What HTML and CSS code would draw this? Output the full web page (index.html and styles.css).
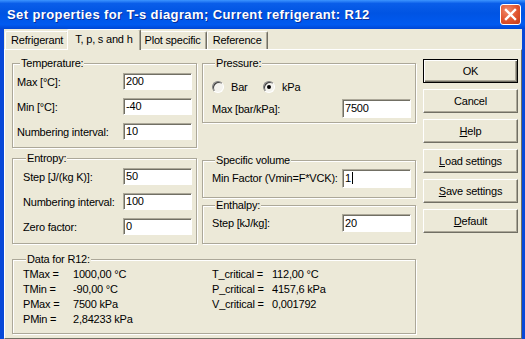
FILE: index.html
```html
<!DOCTYPE html>
<html lang="en">
<head>
    <meta charset="UTF-8" />
    <title>Set properties for T-s diagram</title>
    <link rel="stylesheet" href="styles.css">
</head>
<body>
<div class="window">
    <div class="titlebar">
        <span class="title">Set properties for T-s diagram; Current refrigerant: R12</span>
        <span class="close">
            <svg width="13" height="13" viewBox="0 0 13 13"><path d="M2 2 L11 11 M11 2 L2 11" stroke="#fff" stroke-width="2.4" stroke-linecap="square"/></svg>
        </span>
    </div>

    <div class="client">
        <div class="tabs">
            <div class="tab">Refrigerant</div>
            <div class="tab active">T, p, s and h</div>
            <div class="tab">Plot specific</div>
            <div class="tab">Reference</div>
        </div>

        <div class="page">
            <div class="main">
                <div class="col">
                    <div class="group temp">
                        <div class="group-title">Temperature:</div>
                        <div class="row"><span class="lbl">Max [°C]:</span><div class="field">200</div></div>
                        <div class="row"><span class="lbl">Min [°C]:</span><div class="field">-40</div></div>
                        <div class="row"><span class="lbl">Numbering interval:</span><div class="field">10</div></div>
                    </div>
                    <div class="group entropy">
                        <div class="group-title">Entropy:</div>
                        <div class="row"><span class="lbl">Step [J/(kg K)]:</span><div class="field">50</div></div>
                        <div class="row"><span class="lbl">Numbering interval:</span><div class="field">100</div></div>
                        <div class="row"><span class="lbl">Zero factor:</span><div class="field">0</div></div>
                    </div>
                </div>

                <div class="col">
                    <div class="group pressure">
                        <div class="group-title">Pressure:</div>
                        <div class="radios">
                            <span class="radio"><span class="dot"></span>Bar</span>
                            <span class="radio"><span class="dot checked"></span>kPa</span>
                        </div>
                        <div class="row tall"><span class="lbl">Max [bar/kPa]:</span><div class="field">7500</div></div>
                    </div>
                    <div class="group specvol">
                        <div class="group-title">Specific volume</div>
                        <div class="row tall"><span class="lbl">Min Factor (Vmin=F*VCK):</span><div class="field">1<span class="caret"></span></div></div>
                    </div>
                    <div class="group enthalpy">
                        <div class="group-title">Enthalpy:</div>
                        <div class="row tall"><span class="lbl">Step [kJ/kg]:</span><div class="field">20</div></div>
                    </div>
                </div>

                <div class="group data">
                    <div class="group-title">Data for R12:</div>
                    <div class="data-grid">
                        <span>TMax =</span><span>1000,00 °C</span><span>T_critical =</span><span>112,00 °C</span>
                        <span>TMin =</span><span>-90,00 °C</span><span>P_critical =</span><span>4157,6 kPa</span>
                        <span>PMax =</span><span>7500 kPa</span><span>V_critical =</span><span>0,001792</span>
                        <span>PMin =</span><span>2,84233 kPa</span><span></span><span></span>
                    </div>
                </div>
            </div>

            <div class="buttons">
                <div class="btn default">OK</div>
                <div class="btn">Cancel</div>
                <div class="btn"><u>H</u>elp</div>
                <div class="btn"><u>L</u>oad settings</div>
                <div class="btn"><u>S</u>ave settings</div>
                <div class="btn"><u>D</u>efault</div>
            </div>
        </div>
    </div>
</div>
</body>
</html>
```

FILE: styles.css
```css
* {
    box-sizing: border-box;
}
body {
    margin: 0;
    font-family: "Liberation Sans", Arial, sans-serif;
    font-size: 11px;
    letter-spacing: -0.2px;
    color: #000;
    background: #ece9d8;
}
.window {
    width: 525px;
    height: 339px;
    display: flex;
    flex-direction: column;
    overflow: hidden;
}

/* title bar */
.titlebar {
    height: 29px;
    flex: none;
    display: flex;
    align-items: center;
    justify-content: space-between;
    padding: 0 4px 0 7px;
    background: linear-gradient(to bottom, #3d95ff 0%, #0a5ee9 12%, #0054e3 45%, #005af0 85%, #0046d4 100%);
}
.title {
    color: #fff;
    font-size: 13px;
    font-weight: bold;
    letter-spacing: 0.4px;
    text-shadow: 1px 1px 0 #0a2f9a;
}
.close {
    width: 21px;
    height: 21px;
    display: flex;
    align-items: center;
    justify-content: center;
    border: 1px solid #fff;
    border-radius: 3px;
    background: radial-gradient(circle at 35% 30%, #f08a6c 0%, #e0532d 55%, #c43a18 100%);
}

/* client area */
.client {
    flex: 1;
    display: flex;
    flex-direction: column;
    border-left: 4px solid #0848d8;
    border-right: 3px solid #0848d8;
    background: #ece9d8;
}
.tabs {
    height: 20px;
    flex: none;
    display: flex;
    align-items: flex-end;
    padding-left: 1px;
}
.tab {
    height: 18px;
    line-height: 16px;
    padding: 0 5px;
    border: 1px solid;
    border-bottom: none;
    border-color: #fff #716f64 transparent #fff;
    border-radius: 2px 2px 0 0;
    box-shadow: inset -1px 0 0 #aca899;
}
.tab.active {
    height: 21px;
    line-height: 18px;
    margin: 0 -2px -1px -2px;
    padding: 0 7px;
    background: #ece9d8;
    position: relative;
    z-index: 1;
}
.page {
    flex: 1;
    display: flex;
    border: 1px solid;
    border-color: #fff #716f64 #716f64 #fff;
    padding: 7px 2px 0 7px;
}
.main {
    display: grid;
    grid-template-columns: 185px 214px;
    column-gap: 5px;
    align-content: start;
}
.col {
    display: flex;
    flex-direction: column;
}

/* group boxes */
.group {
    border: 1px solid #aca899;
    box-shadow: inset 1px 1px 0 #fff, 1px 1px 0 #fff;
    margin-top: 6px;
    padding: 0 4px 0 4px;
}
.group-title {
    width: fit-content;
    margin: -7px 0 0 3px;
    padding: 0 1px;
    line-height: 13px;
    background: #ece9d8;
}
.temp {
    height: 85px;
}
.entropy {
    height: 86px;
    margin-top: 10px;
    padding-left: 10px;
}
.pressure {
    height: 60px;
    padding-left: 9px;
}
.specvol {
    height: 38px;
    margin-top: 37px;
    padding-left: 9px;
}
.enthalpy {
    height: 39px;
    margin-top: 7px;
    padding-left: 9px;
}
.data {
    grid-column: 1 / 3;
    height: 75px;
    margin-top: 15px;
    padding-left: 10px;
}

.row {
    display: flex;
    align-items: center;
    height: 17px;
    margin-top: 8px;
}
.row:nth-child(2) {
    margin-top: 3px;
}
.lbl {
    width: 106px;
    flex: none;
}
.entropy .lbl {
    width: 100px;
}
.field {
    width: 69px;
    height: 17px;
    line-height: 15px;
    padding-left: 2px;
    background: #fff;
    border: 1px solid;
    border-color: #aca899 #fff #fff #aca899;
    box-shadow: inset 1px 1px 0 #716f64;
}
.row.tall {
    height: 19px;
}
.row.tall .lbl {
    width: 130px;
}
.row.tall .field {
    height: 19px;
    line-height: 17px;
}
.specvol .row.tall,
.enthalpy .row.tall {
    height: 18px;
    margin-top: 2px;
}
.specvol .field,
.enthalpy .row.tall .field {
    height: 18px;
    line-height: 16px;
}
.caret {
    display: inline-block;
    width: 1px;
    height: 12px;
    margin-left: 1px;
    background: #000;
    vertical-align: -2px;
}

/* radios */
.radios {
    display: flex;
    height: 13px;
    margin-top: 10px;
    margin-bottom: 6px;
}
.radio {
    display: flex;
    align-items: center;
    width: 51px;
}
.dot {
    width: 12px;
    height: 12px;
    margin-right: 7px;
    border-radius: 50%;
    border: 1px solid;
    border-color: #808080 #fff #fff #808080;
    box-shadow: inset 1px 1px 0 #404040;
    background: #f4f3ee;
    display: flex;
    align-items: center;
    justify-content: center;
}
.dot.checked::after {
    content: "";
    width: 4px;
    height: 4px;
    border-radius: 50%;
    background: #000;
}
.row.tall:nth-child(3) {
    margin-top: 0;
}

/* data block */
.data-grid {
    display: grid;
    grid-template-columns: 50px 139px 60px auto;
    grid-auto-rows: 15px;
    line-height: 15px;
    margin-top: 1px;
}

/* buttons */
.buttons {
    display: flex;
    flex-direction: column;
    gap: 6px;
    padding-top: 2px;
    margin-left: 7px;
}
.btn {
    width: 95px;
    height: 24px;
    line-height: 22px;
    text-align: center;
    border: 1px solid;
    border-color: #fff #716f64 #716f64 #fff;
    box-shadow: inset -1px -1px 0 #aca899;
    background: #ece9d8;
}
.btn.default {
    border-color: #000;
    box-shadow: inset 1px 1px 0 #fff, inset -1px -1px 0 #716f64, inset -2px -2px 0 #aca899;
}
```
